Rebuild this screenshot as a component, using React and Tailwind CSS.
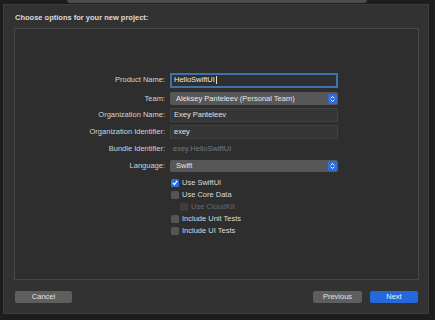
import React from 'react';

// Xcode "new project" options sheet, dark appearance
const font = { fontFamily: '"Liberation Sans", Arial, sans-serif' };

function Label({ children }) {
  return (
    <div className="w-[151px] shrink-0 text-right text-[7.5px] leading-none text-[#d4d4d4] pr-[1px]">
      {children}
    </div>
  );
}

function Stepper() {
  return (
    <div className="w-[9px] h-[10px] rounded-[2px] bg-[#2d6de0] flex items-center justify-center">
      <svg width="5" height="8" viewBox="0 0 5 8" fill="none" stroke="#fff" strokeWidth="1" strokeLinecap="round" strokeLinejoin="round">
        <path d="M1 3 L2.5 1.5 L4 3" />
        <path d="M1 5 L2.5 6.5 L4 5" />
      </svg>
    </div>
  );
}

function Popup({ value }) {
  return (
    <div className="w-[168px] h-full rounded-[2px] bg-[#575757] flex items-center justify-between pl-[6px] pr-[1px]">
      <span className="text-[7.5px] leading-none text-[#e6e6e6]">{value}</span>
      <Stepper />
    </div>
  );
}

function Field({ value }) {
  return (
    <div className="w-[168px] h-full bg-[#363636] border border-[#404040] flex items-center px-[3px]">
      <span className="text-[7.5px] leading-none text-[#e0e0e0]">{value}</span>
    </div>
  );
}

function Check({ checked, disabled, children, indent }) {
  return (
    <div className={`h-[12px] flex items-center gap-[3px] ${indent ? 'pl-[9px]' : ''}`}>
      <div
        className={`w-[8px] h-[8px] rounded-[1.5px] flex items-center justify-center ${
          checked ? 'bg-[#2d6de0]' : disabled ? 'bg-[#3d3d3d]' : 'bg-[#555555]'
        }`}
      >
        {checked && (
          <svg width="6" height="6" viewBox="0 0 6 6" fill="none" stroke="#fff" strokeWidth="1.2" strokeLinecap="round" strokeLinejoin="round">
            <path d="M1 3.2 L2.4 4.6 L5 1.2" />
          </svg>
        )}
      </div>
      <span className={`text-[7.5px] leading-none ${disabled ? 'text-[#6a6a6a]' : 'text-[#dadada]'}`}>{children}</span>
    </div>
  );
}

function Button({ children, primary, className = '' }) {
  return (
    <div
      className={`h-[12px] rounded-[2px] flex items-center justify-center text-[7.5px] leading-none ${
        primary ? 'bg-[#2468dc] text-[#f2f2f2]' : 'bg-[#5e5e5e] text-[#e2e2e2]'
      } ${className}`}
    >
      {children}
    </div>
  );
}

export default function App() {
  return (
    <div className="w-[435px] h-[320px] bg-[#1d1d1d] overflow-hidden flex flex-col" style={font}>
      {/* window title bar peeking above the sheet */}
      <div className="ml-[67px] w-[300px] h-[3px] bg-[#4b4b4b] rounded-b-[3px] shrink-0" />

      {/* sheet */}
      <div className="ml-[3px] mt-[1px] w-[426px] h-[310px] bg-[#323232] border border-[#3c3c3c] flex flex-col">
        <div className="pl-[11px] pt-[8px] text-[7.5px] leading-[9px] font-bold text-[#dcdcdc]">
          Choose options for your new project:
        </div>

        <div className="ml-[10px] mt-[6px] w-[405px] h-[252px] bg-[#2e2e2e] border border-[#474747] flex flex-col pt-[44px]">
          <div className="flex items-center gap-[4px] h-[14px]">
            <Label>Product Name:</Label>
            <div className="w-[168px] h-[15px] border-2 border-[#3f72aa] bg-[#2f2f2f] flex items-center px-[2px]">
              <span className="text-[7.5px] leading-none text-[#ececec]">HelloSwiftUI</span>
              <span className="w-[1px] h-[8px] bg-[#e0e0e0] ml-[1px]" />
            </div>
          </div>
          <div className="flex items-center gap-[4px] h-[13px] mt-[5px]">
            <Label>Team:</Label>
            <Popup value="Aleksey Panteleev (Personal Team)" />
          </div>
          <div className="flex items-center gap-[4px] h-[14px] mt-[3px]">
            <Label>Organization Name:</Label>
            <Field value="Exey Panteleev" />
          </div>
          <div className="flex items-center gap-[4px] h-[14px] mt-[3px]">
            <Label>Organization Identifier:</Label>
            <Field value="exey" />
          </div>
          <div className="flex items-center gap-[4px] h-[14px] mt-[3px]">
            <Label>Bundle Identifier:</Label>
            <span className="text-[7.5px] leading-none text-[#7a7a7a] pl-[3px]">exey.HelloSwiftUI</span>
          </div>
          <div className="flex items-center gap-[4px] h-[12px] mt-[4px]">
            <Label>Language:</Label>
            <Popup value="Swift" />
          </div>

          <div className="flex flex-col pl-[156px] mt-[5px]">
            <Check checked>Use SwiftUI</Check>
            <Check>Use Core Data</Check>
            <Check disabled indent>Use CloudKit</Check>
            <Check>Include Unit Tests</Check>
            <Check>Include UI Tests</Check>
          </div>
        </div>

        <div className="flex items-center pl-[11px] pr-[10px] mt-[11px]">
          <Button className="w-[57px]">Cancel</Button>
          <div className="flex-1" />
          <Button className="w-[49px]">Previous</Button>
          <Button primary className="w-[48px] ml-[8px]">Next</Button>
        </div>
      </div>
    </div>
  );
}
